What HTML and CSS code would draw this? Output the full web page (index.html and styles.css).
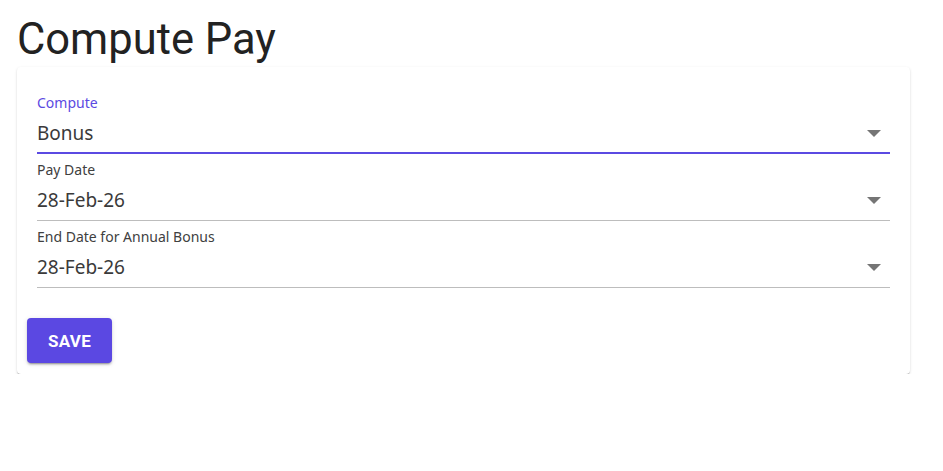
FILE: index.html
```html
<!DOCTYPE html>
<html lang="en">
<head>
  <meta charset="UTF-8">
  <meta name="viewport" content="width=device-width, initial-scale=1">
  <title>Compute Pay</title>
  <link rel="stylesheet" href="styles.css">
</head>
<body>

<h1 class="page-title">Compute Pay</h1>

<div class="card">
  <!-- Compute type -->
  <div class="field focused">
    <label class="field-label">Compute</label>
    <div class="field-input">
      <span class="field-value">Bonus</span>
      <svg class="arrow" viewBox="0 0 14 7" width="14" height="7"><polygon points="0,0 14,0 7,7"/></svg>
    </div>
  </div>

  <div class="field">
    <label class="field-label">Pay Date</label>
    <div class="field-input">
      <span class="field-value">28-Feb-26</span>
      <svg class="arrow" viewBox="0 0 14 7" width="14" height="7"><polygon points="0,0 14,0 7,7"/></svg>
    </div>
  </div>

  <div class="field">
    <label class="field-label">End Date for Annual Bonus</label>
    <div class="field-input">
      <span class="field-value">28-Feb-26</span>
      <svg class="arrow" viewBox="0 0 14 7" width="14" height="7"><polygon points="0,0 14,0 7,7"/></svg>
    </div>
  </div>

  <button class="btn-save" type="button">Save</button>
</div>

</body>
</html>
```

FILE: styles.css
```css
body { margin: 0; padding: 0 33px 0 17px; font-family: "Noto Sans", "Open Sans", sans-serif; background: #fff; color: #3c3c3c; }
.page-title { font-family: Roboto, sans-serif; font-weight: 400; font-size: 43.5px; color: #222; margin: 0; padding: 15px 0 0 0; line-height: 50px; }
.card { background: #fff; border-radius: 4px; padding: 26px 20px 11px 20px; margin-top: 2px;
  box-shadow: 0 2px 1px -1px rgba(0,0,0,0.2), 0 1px 1px 0 rgba(0,0,0,0.14), 0 1px 3px 0 rgba(0,0,0,0.12); }
.field { margin-bottom: 6px; }
.field-label { display: block; font-size: 14px; line-height: 20px; color: #404040; }
.field.focused .field-label { color: #5b4ae2; }
.field-input { display: flex; align-items: center; justify-content: space-between; padding: 7px 0; line-height: 26px; border-bottom: 1px solid #bdbdbd; }
.field.focused .field-input { border-bottom: 2px solid #5b4ae2; padding-bottom: 6px; }
.field-value { font-size: 19px; color: #3a3a3a; }
.arrow { fill: #757575; margin-right: 9px; }
.btn-save { margin: 24px 0 0 -10px; height: 45px; padding: 0 21px; border: none; border-radius: 4px; background: #5b48e2; color: #fff;
  font-family: Roboto, sans-serif; font-weight: 700; font-size: 17px; text-transform: uppercase; letter-spacing: 0.3px;
  box-shadow: 0 3px 1px -2px rgba(0,0,0,0.2), 0 2px 2px 0 rgba(0,0,0,0.14), 0 1px 5px 0 rgba(0,0,0,0.12); }
```
